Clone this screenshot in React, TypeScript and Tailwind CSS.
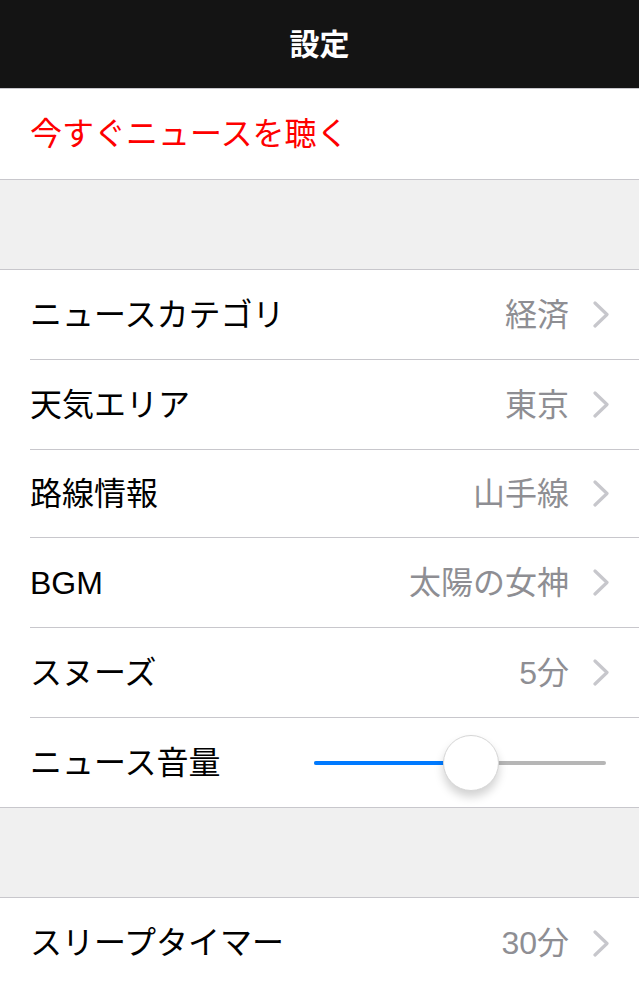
const font = { fontFamily: '"Liberation Sans", "Noto Sans CJK JP", sans-serif' };

type RowProps = {
  label: string;
  value?: string;
  last?: boolean;
  short?: boolean;
};

function Chevron() {
  return (
    <svg width="18" height="27" viewBox="0 0 18 27" className="ml-[23px] shrink-0">
      <path d="M3 2 L15 13.5 L3 25" fill="none" stroke="#c7c7cc" strokeWidth="3.2" strokeLinecap="round" strokeLinejoin="round" />
    </svg>
  );
}

function SettingRow({ label, value, last, short }: RowProps) {
  return (
    <div className={`pl-[30px] bg-white ${last ? 'border-b border-[#c8c7cc]' : ''}`}>
      <div className={`flex items-center ${short ? 'h-[88px]' : 'h-[90px]'} pr-[29px] ${last ? '' : 'border-b border-[#c8c7cc]'}`}>
        <span className="text-[32px] text-black">{label}</span>
        <span className="ml-auto text-[32px] text-[#8e8e93]">{value}</span>
        <Chevron />
      </div>
    </div>
  );
}

function VolumeRow() {
  const fill = 157;
  return (
    <div className="pl-[30px] bg-white border-b border-[#c8c7cc]">
      <div className="flex items-center h-[89px] pr-[33px]">
        <span className="text-[32px] text-black">ニュース音量</span>
        <div className="ml-auto relative w-[292px] h-[4px] rounded-full bg-[#b6b6b6]">
          <div className="absolute left-0 top-0 h-[4px] rounded-full bg-[#007aff]" style={{ width: fill }} />
          <div
            className="absolute top-1/2 -translate-y-1/2 -translate-x-1/2 w-[56px] h-[56px] rounded-full bg-white border border-[#d6d6d6] shadow-[0_6px_10px_rgba(0,0,0,0.18)]"
            style={{ left: fill }}
          />
        </div>
      </div>
    </div>
  );
}

function Spacer() {
  return <div className="h-[90px] bg-[#f0f0f0] border-b border-[#c8c7cc]" />;
}

export default function App() {
  return (
    <div className="w-[639px] h-[985px] overflow-hidden bg-white" style={font}>
      <div className="h-[89px] bg-[#141414] border-b border-[#c8c7cc] flex items-center justify-center">
        <span className="text-white text-[30px] font-bold">設定</span>
      </div>
      <div className="h-[91px] bg-white border-b border-[#c8c7cc] flex items-center pl-[30px]">
        <span className="text-[32px] text-[#fe0000]">今すぐニュースを聴く</span>
      </div>
      <Spacer />
      <SettingRow label="ニュースカテゴリ" value="経済" />
      <SettingRow label="天気エリア" value="東京" />
      <SettingRow label="路線情報" value="山手線" short />
      <SettingRow label="BGM" value="太陽の女神" />
      <SettingRow label="スヌーズ" value="5分" />
      <VolumeRow />
      <Spacer />
      <SettingRow label="スリープタイマー" value="30分" last />
    </div>
  );
}
